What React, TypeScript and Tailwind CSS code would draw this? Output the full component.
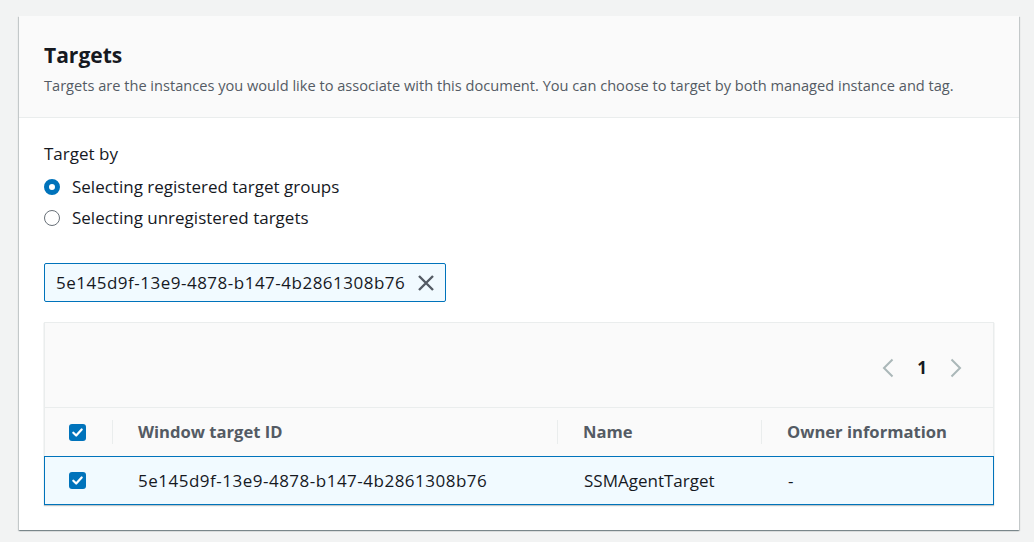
import { JSX } from 'react';

const rows = [
  { id: '5e145d9f-13e9-4878-b147-4b2861308b76', name: 'SSMAgentTarget', owner: '-' },
];

function Checkbox(): JSX.Element {
  return (
    <span className="flex h-[17px] w-[17px] items-center justify-center rounded-[3px] bg-[#0073bb]">
      <svg width="13" height="13" viewBox="0 0 14 14" fill="none">
        <path d="M2.5 7.2 5.6 10.2 11.5 3.8" stroke="white" strokeWidth="2.4" strokeLinecap="round" strokeLinejoin="round" />
      </svg>
    </span>
  );
}

function Radio({ checked, label }: { checked?: boolean; label: string }): JSX.Element {
  return (
    <label className="flex h-[31px] items-center gap-[12px]">
      {checked ? (
        <span className="h-[16px] w-[16px] rounded-full border-[5px] border-[#0073bb] bg-white" />
      ) : (
        <span className="h-[16px] w-[16px] rounded-full border-[1.5px] border-[#687078] bg-white" />
      )}
      <span>{label}</span>
    </label>
  );
}

function Chevron({ dir }: { dir: 'left' | 'right' }): JSX.Element {
  return (
    <svg width="14" height="20" viewBox="0 0 14 20" fill="none">
      <path
        d={dir === 'left' ? 'M11.5 1.5 3 10l8.5 8.5' : 'M2.5 1.5 11 10l-8.5 8.5'}
        stroke="#aab7b8"
        strokeWidth="2"
      />
    </svg>
  );
}

export default function App(): JSX.Element {
  return (
    <div className="min-h-[542px] bg-[#f2f3f3] pt-[16px] pl-[19px] pr-[15px] pb-[11px] text-[17px] leading-[22px] text-[#16191f] [font-family:'Open_Sans',sans-serif]">
      <section className="bg-white shadow-[0_1px_1px_0_rgba(0,28,36,0.3),1px_1px_1px_0_rgba(0,28,36,0.15),-1px_1px_1px_0_rgba(0,28,36,0.15)]">
        <div className="border-b border-[#eaeded] bg-[#fafafa] px-[25px] pt-[27px] pb-[22px]">
          <h2 className="text-[21px] leading-[24px] font-bold">Targets</h2>
          <p className="mt-[8px] text-[14.6px] leading-[20px] text-[#545b64]">
            Targets are the instances you would like to associate with this document. You can choose to target by both managed instance and tag.
          </p>
        </div>

        <div className="px-[25px] pt-[25px] pb-[25px]">
          <div>Target by</div>
          <div className="mt-[6px] flex flex-col">
            <Radio checked label="Selecting registered target groups" />
            <Radio label="Selecting unregistered targets" />
          </div>

          <div className="mt-[30px] flex h-[39px] w-[402px] items-center justify-between rounded-[2px] border border-[#0073bb] bg-[#f1faff] pl-[11px] pr-[10px]">
            <span className="tracking-[0.5px]">5e145d9f-13e9-4878-b147-4b2861308b76</span>
            <svg width="18" height="18" viewBox="0 0 18 18" fill="none">
              <path d="M2 2l14 14M16 2 2 16" stroke="#545b64" strokeWidth="2.4" />
            </svg>
          </div>

          <div className="mt-[20px] border border-[#eaeded] shadow-[0_1px_1px_0_rgba(0,28,36,0.25)]">
            <div className="flex h-[85px] items-center justify-end gap-[22px] border-b border-[#eaeded] bg-[#fafafa] pt-[5px] pr-[30px]">
              <Chevron dir="left" />
              <span className="font-bold">1</span>
              <Chevron dir="right" />
            </div>
            <div className="grid grid-cols-[67px_445px_204px_1fr] bg-[#fafafa]">
              <div className="flex h-[48px] items-center pl-[24px]">
                <Checkbox />
              </div>
              {['Window target ID', 'Name', 'Owner information'].map((h) => (
                <div key={h} className="flex h-[48px] items-center">
                  <span className="h-[24px] w-px bg-[#eaeded]" />
                  <span className="pl-[25px] text-[16.6px] font-bold text-[#545b64]">{h}</span>
                </div>
              ))}
            </div>
            {rows.map((r) => (
              <div key={r.id} className="-mx-px -mb-px grid h-[49px] grid-cols-[68px_445px_204px_1fr] items-center border border-[#0073bb] bg-[#f1faff]">
                <div className="pl-[24px]">
                  <Checkbox />
                </div>
                <div className="pl-[25px] tracking-[0.5px]">{r.id}</div>
                <div className="pl-[26px]">{r.name}</div>
                <div className="pl-[26px]">{r.owner}</div>
              </div>
            ))}
          </div>
        </div>
      </section>
    </div>
  );
}
